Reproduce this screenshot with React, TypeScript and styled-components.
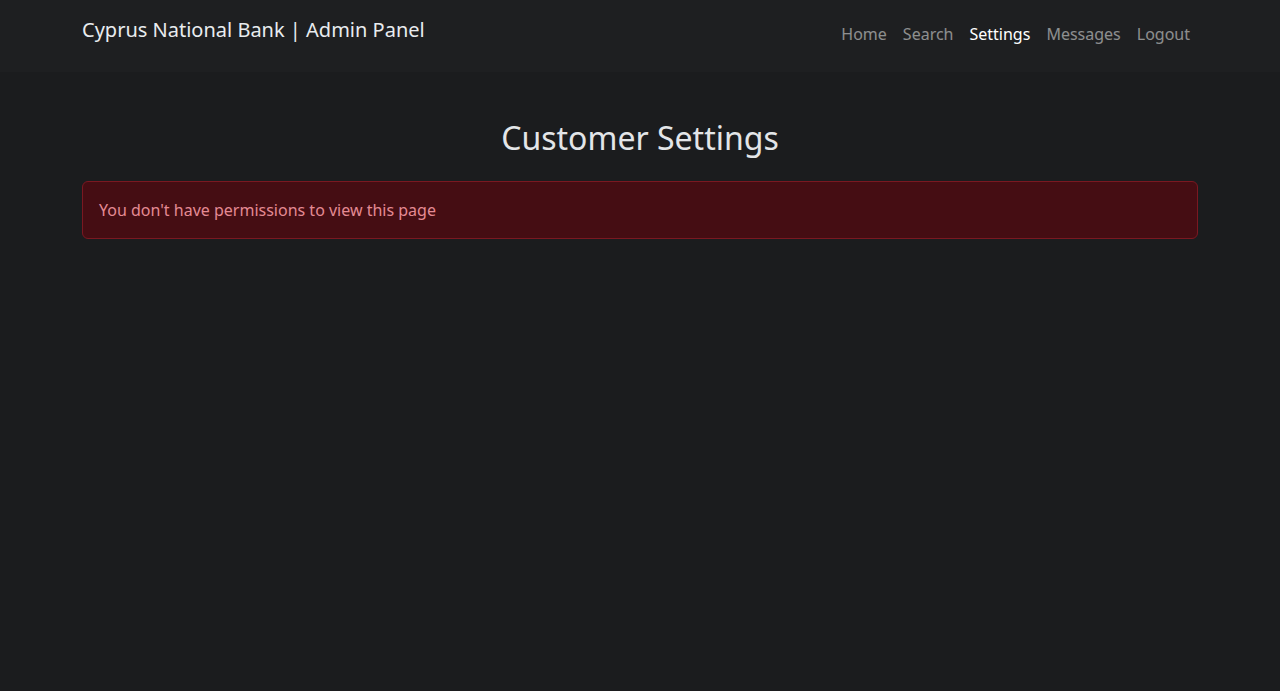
import styled, { createGlobalStyle } from "styled-components";

const GlobalStyle = createGlobalStyle`
  html, body {
    margin: 0;
    padding: 0;
    background-color: #1b1c1e;
    color: #dee2e6;
    font-family: "Noto Sans", "Open Sans", sans-serif;
    font-size: 16px;
    line-height: 1.5;
  }
  #root {
    min-height: 100vh;
  }
`;

const Navbar = styled.nav`
  background-color: #1e1f21;
  height: 72px;
`;

const Container = styled.div`
  max-width: 1116px;
  margin: 0 auto;
  padding: 0 12px;
`;

const NavInner = styled(Container)`
  display: flex;
  justify-content: space-between;
  align-items: flex-start;
`;

const Brand = styled.a`
  display: block;
  margin-top: 15px;
  font-size: 20px;
  line-height: 30px;
  color: #e9ecef;
  text-decoration: none;
`;

const NavList = styled.ul`
  display: flex;
  list-style: none;
  margin: 22px 0 0;
  padding: 0;
`;

const NavLink = styled.a<{ $active?: boolean }>`
  display: block;
  padding: 0 8px;
  font-size: 16px;
  line-height: 24px;
  text-decoration: none;
  color: ${(p) => (p.$active ? "#ffffff" : "rgba(255, 255, 255, 0.5)")};
`;

const Title = styled.h2`
  margin: 47px 0 24px;
  text-align: center;
  font-size: 32px;
  font-weight: 400;
  line-height: 1.2;
  color: #e3e5e8;
`;

const Alert = styled.div`
  padding: 16px;
  border: 1px solid #7a1821;
  border-radius: 6px;
  background-color: #450d13;
  color: #e48a93;
  font-size: 16px;
  line-height: 24px;
`;

const links = ["Home", "Search", "Settings", "Messages", "Logout"];

export default function App() {
  return (
    <>
      <GlobalStyle />
      <Navbar>
        <NavInner>
          <Brand href="#">Cyprus National Bank | Admin Panel</Brand>
          <NavList>
            {links.map((l) => (
              <li key={l}>
                <NavLink href="#" $active={l === "Settings"}>
                  {l}
                </NavLink>
              </li>
            ))}
          </NavList>
        </NavInner>
      </Navbar>
      <Container>
        <Title>Customer Settings</Title>
        <Alert>You don't have permissions to view this page</Alert>
      </Container>
    </>
  );
}
